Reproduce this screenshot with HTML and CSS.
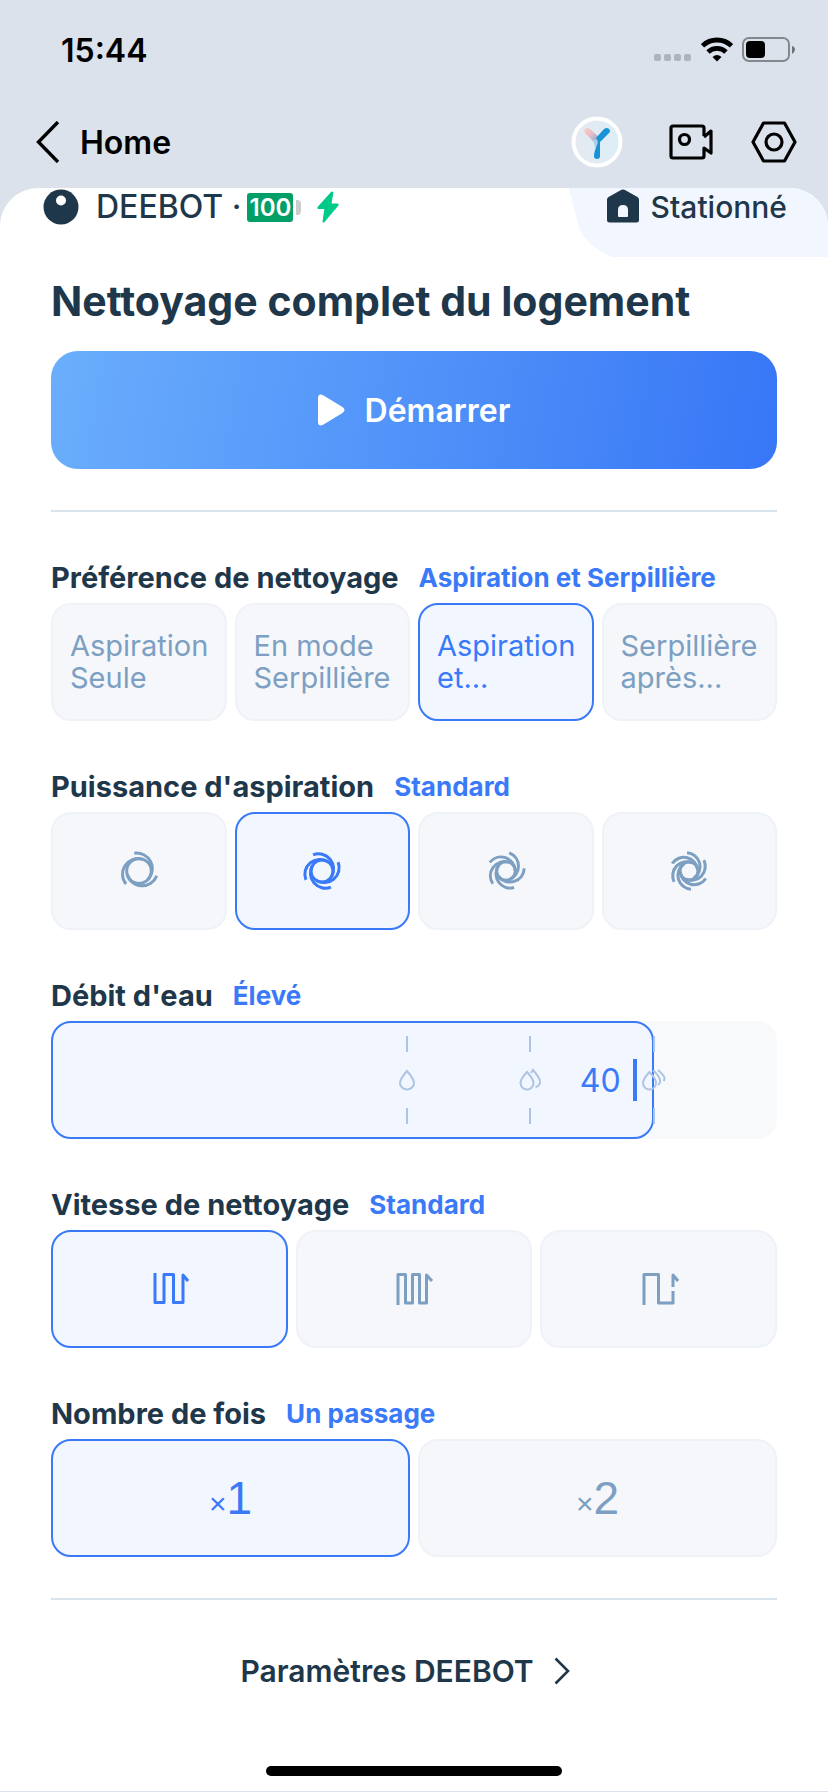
FILE: index.html
```
<!DOCTYPE html>
<html lang="fr">
<head>
    <meta charset="UTF-8">
    <meta name="viewport" content="width=device-width, initial-scale=1.0">
    <title>DEEBOT</title>
    <link rel="stylesheet" href="styles.css">
</head>
<body>

<!-- status bar -->
<div class="status">
    <span class="time">15:44</span>
    <div class="status-icons">
        <svg width="38" height="26" viewBox="0 0 38 26" fill="#adb4be">
            <rect x="0" y="17" width="7" height="7" rx="2"/>
            <rect x="10" y="17" width="7" height="7" rx="2"/>
            <rect x="20" y="17" width="7" height="7" rx="2"/>
            <rect x="30" y="17" width="7" height="7" rx="2"/>
        </svg>
        <svg width="32" height="26" viewBox="0 0 32 26" fill="none" stroke="#000" stroke-width="4.8">
            <path d="M1.500 8.800A21 21 0 0 1 30.500 8.800"/>
            <path d="M7 15A13 13 0 0 1 25 15"/>
            <path d="M16 24.500L11.500 20Q16 16 20.500 20Z" fill="#000" stroke="none"/>
        </svg>
        <svg width="54" height="26" viewBox="0 0 54 26">
            <rect x="1" y="1" width="46" height="23" rx="6" fill="none" stroke="#85898f" stroke-width="2"/>
            <rect x="4" y="4" width="19" height="17" rx="4" fill="#000"/>
            <path d="M50 9Q53 10 53 12.500T50 17Z" fill="#6f7276"/>
        </svg>
    </div>
</div>

<!-- navigation -->
<div class="nav">
    <a class="back" href="#">
        <svg width="24" height="42" viewBox="0 0 24 42" fill="none" stroke="#000" stroke-width="3.400">
            <path d="M22 1L2.500 21L22 41"/>
        </svg>
        Home
    </a>
    <div class="nav-buttons">
        <button class="avatar" aria-label="Yiko">
            <svg width="52" height="52" viewBox="0 0 52 52">
                <defs>
                    <linearGradient id="pink" x1="0" y1="0" x2="1" y2="1">
                        <stop offset="0" stop-color="#ffc9c4"/>
                        <stop offset=".4" stop-color="#e9bdc4"/>
                        <stop offset="1" stop-color="#62a8dc"/>
                    </linearGradient>
                    <linearGradient id="face" x1="0" y1="0" x2="1" y2="0">
                        <stop offset="0" stop-color="#e5e9ef"/>
                        <stop offset="1" stop-color="#dceef8"/>
                    </linearGradient>
                </defs>
                <circle cx="26" cy="26" r="23.500" fill="url(#face)" stroke="#fff" stroke-width="4"/>
                <path d="M14 17Q12 13 16 12Q18 12 20 14L29 22L27 28Q24 27 22 25Z" fill="url(#pink)"/>
                <path d="M22 24Q24 31 25 33L29 23Z" fill="#a9cfec"/>
                <path d="M33 13Q36 11 38 13T38 17L29 26Q29 33 29 40Q29 43 26 43T23 40Q23 36 26 29Q28 26 25 22Z" fill="#1793d6"/>
            </svg>
        </button>
        <button aria-label="Caméra">
            <svg width="44" height="36" viewBox="0 0 44 36" fill="none" stroke="#000" stroke-width="3.200" stroke-linejoin="round">
                <path d="M35 12V4Q35 2 33 2H4Q2 2 2 4V32Q2 34 4 34H33Q35 34 35 32V24L42 29V7L35 13"/>
                <circle cx="15.500" cy="15.500" r="5"/>
            </svg>
        </button>
        <button aria-label="Réglages">
            <svg width="46" height="42" viewBox="0 0 46 42" fill="none" stroke="#000" stroke-width="3.200" stroke-linejoin="round">
                <path d="M12.500 2H33.500L44 21L33.500 40H12.500L2 21Z"/>
                <circle cx="23" cy="21" r="8"/>
            </svg>
        </button>
    </div>
</div>

<div class="sheet">
    <div class="device">
        <div class="robot">
            <svg width="36" height="36" viewBox="0 0 36 36">
                <circle cx="18" cy="18" r="17.500" fill="#1f374a"/>
                <circle cx="18" cy="11.500" r="5" fill="#fff"/>
            </svg>
            <span class="name">DEEBOT ·</span>
            <span class="battery">100</span>
            <svg class="bolt" width="22" height="32" viewBox="0 0 22 32" fill="#00c98a">
                <path d="M14 1Q16.500 -.5 16.300 2L14.500 12.500H20.500Q22.500 13 21 15L7.500 31Q5.500 32.500 5.600 30L7.300 18H1.500Q-.5 17.500 1 15.500Z"/>
            </svg>
        </div>
        <div class="station">
            <svg width="32" height="34" viewBox="0 0 32 34">
                <path d="M14.500 .8Q16 0 17.500 .8L30.500 8Q32 9 32 10.500V31Q32 33.500 29.500 33.500H2.500Q0 33.500 0 31V10.500Q0 9 1.500 8Z" fill="#1f374a"/>
                <path d="M11 27V21Q11 16 16 16T21 21V27Q21 28 20 28H12Q11 28 11 27Z" fill="#f2f7ff"/>
            </svg>
            Stationné
        </div>
    </div>

    <div class="content">
        <h1>Nettoyage complet du logement</h1>
        <button class="start">
            <svg width="27" height="32" viewBox="0 0 27 32" fill="#fff">
                <path d="M0 4.500Q0 -1.500 5.500 1.500L24.500 13Q28.500 16 24.500 19L5.500 30.500Q0 33.500 0 27.500Z"/>
            </svg>
            Démarrer
        </button>

        <hr>

        <fieldset>
            <legend>Préférence de nettoyage <span>Aspiration et Serpillière</span></legend>
            <div class="options">
                <label class="option text"><input type="radio" name="mode">Aspiration<br>Seule</label>
                <label class="option text"><input type="radio" name="mode">En mode<br>Serpillière</label>
                <label class="option text"><input type="radio" name="mode" checked>Aspiration<br>et...</label>
                <label class="option text"><input type="radio" name="mode">Serpillière<br>après...</label>
            </div>
        </fieldset>

        <fieldset>
            <legend>Puissance d'aspiration <span>Standard</span></legend>
            <div class="options">
                <label class="option"><input type="radio" name="power" aria-label="Silencieux">
                    <svg class="fan" viewBox="-20 -20 40 40">
                        <circle r="12.300"/>
                        <path id="b1" d="M0 -18.400A15.600 15.600 0 0 1 6.200 10.600" transform="rotate(-15)"/>
                        <use href="#b1" transform="rotate(120)"/>
                        <use href="#b1" transform="rotate(240)"/>
                    </svg>
                </label>
                <label class="option"><input type="radio" name="power" aria-label="Standard" checked>
                    <svg class="fan" viewBox="-20 -20 40 40">
                        <circle r="11"/>
                        <path id="b2" d="M0 -18.400A15 15 0 0 1 5.500 9.500" transform="rotate(-29)"/>
                        <use href="#b2" transform="rotate(90)"/>
                        <use href="#b2" transform="rotate(180)"/>
                        <use href="#b2" transform="rotate(270)"/>
                    </svg>
                </label>
                <label class="option"><input type="radio" name="power" aria-label="Fort">
                    <svg class="fan" viewBox="-20 -20 40 40">
                        <circle r="9.300"/>
                        <path id="b3" d="M0 -18.400A14.300 14.300 0 0 1 4.600 8" transform="rotate(10)"/>
                        <use href="#b3" transform="rotate(72)"/>
                        <use href="#b3" transform="rotate(144)"/>
                        <use href="#b3" transform="rotate(216)"/>
                        <use href="#b3" transform="rotate(288)"/>
                    </svg>
                </label>
                <label class="option"><input type="radio" name="power" aria-label="Max">
                    <svg class="fan" viewBox="-20 -20 40 40">
                        <circle r="9"/>
                        <path id="b4" d="M0 -18.400A14 14 0 0 1 4.400 7.600" transform="rotate(-6)"/>
                        <use href="#b4" transform="rotate(60)"/>
                        <use href="#b4" transform="rotate(120)"/>
                        <use href="#b4" transform="rotate(180)"/>
                        <use href="#b4" transform="rotate(240)"/>
                        <use href="#b4" transform="rotate(300)"/>
                    </svg>
                </label>
            </div>
        </fieldset>

        <fieldset>
            <legend>Débit d'eau <span>Élevé</span></legend>
            <div class="slider">
                <div class="fill" style="width: 83%">40</div>
                <div class="mark" style="left: 49%">
                    <svg width="24" height="24" viewBox="-12 -12 24 24">
                        <path d="M0 -9Q-7 -1 -7 3A7 6.500 0 0 0 7 3Q7 -1 0 -9Z"/>
                    </svg>
                </div>
                <div class="mark" style="left: 66%">
                    <svg width="24" height="24" viewBox="-12 -12 24 24">
                        <path d="M-3 -8Q-9.500 -1 -9.500 3A6.500 6.500 0 0 0 3.500 3Q3.500 -1 -3 -8Z"/>
                        <path d="M1 -7L3 -10Q10 -2 10 1.500Q10 6 5.500 7"/>
                    </svg>
                </div>
                <div class="mark" style="left: 83%">
                    <svg width="24" height="24" viewBox="-12 -12 24 24">
                        <path d="M-4.500 -8Q-11 -1 -11 3A6.500 6.500 0 0 0 2 3Q2 -1 -4.500 -8Z"/>
                        <path d="M-1 -8L0 -9Q7 -2 6 2Q5.500 4 4 5M4 -10Q11 -4 10.500 -1Q10.500 0 9.500 1"/>
                    </svg>
                </div>
                <input type="range" min="0" max="48" value="40" aria-label="Débit d'eau">
            </div>
        </fieldset>

        <fieldset>
            <legend>Vitesse de nettoyage <span>Standard</span></legend>
            <div class="options">
                <label class="option"><input type="radio" name="speed" aria-label="Standard" checked>
                    <svg class="route" viewBox="-4 0 40 32"><path d="M2 0V29.500H11V1.500H20.500V29.500H30V2L35 8"/></svg>
                </label>
                <label class="option"><input type="radio" name="speed" aria-label="Lent">
                    <svg class="route" viewBox="-4 0 40 32"><path d="M0 32V1.500H7.500V30H14.500V1.500H21.500V30H28.500V2L34 8"/></svg>
                </label>
                <label class="option"><input type="radio" name="speed" aria-label="Rapide">
                    <svg class="route" viewBox="-4 0 40 32"><path d="M1 32V1.500H15.500V30H30V18M30 14V2L35 8"/></svg>
                </label>
            </div>
        </fieldset>

        <fieldset>
            <legend>Nombre de fois <span>Un passage</span></legend>
            <div class="options">
                <label class="option count"><input type="radio" name="count" checked><small>×</small>1</label>
                <label class="option count"><input type="radio" name="count"><small>×</small>2</label>
            </div>
        </fieldset>

        <hr>

        <a class="params" href="#">
            Paramètres DEEBOT
            <svg width="16" height="28" viewBox="0 0 16 28" fill="none" stroke="#1f374a" stroke-width="2.600">
                <path d="M1.500 1.500L14 14L1.500 26.500"/>
            </svg>
        </a>
    </div>

    <div class="home-bar"></div>
</div>

</body>
</html>
```
FILE: styles.css
```
* {
    box-sizing: border-box;
}

body {
    margin: 0;
    min-height: 100vh;
    padding-bottom: 1px;
    display: flex;
    flex-direction: column;
    background: #dbe2ec;
    color: #1f374a;
    font-family: Inter, "Liberation Sans", sans-serif;
}

svg {
    display: block;
    flex: none;
}

button {
    border: 0;
    padding: 0;
    background: none;
    font-family: inherit;
    cursor: pointer;
}

a {
    color: inherit;
    text-decoration: none;
}

/* top bars */
.status {
    height: 100px;
    padding: 0 32px 0 61px;
    display: flex;
    align-items: center;
    justify-content: space-between;
    color: #000;
}

.time {
    font-size: 32px;
    font-weight: 600;
}

.status-icons {
    display: flex;
    gap: 9px;
}

.nav {
    height: 88px;
    padding: 0 31px 4px 36px;
    display: flex;
    align-items: center;
    justify-content: space-between;
    color: #000;
}

.back {
    display: flex;
    align-items: center;
    gap: 20px;
    font-size: 32px;
    font-weight: 600;
}

.nav-buttons {
    display: flex;
    align-items: center;
    gap: 38px;
}

.avatar {
    margin-right: 8px;
}

/* white sheet */
.sheet {
    flex: 1;
    display: flex;
    flex-direction: column;
    background: #fff;
    border-radius: 38px 38px 0 0;
    overflow: hidden;
}

.device {
    display: flex;
    justify-content: space-between;
    height: 69px;
    font-size: 30px;
    font-weight: 500;
    line-height: 36px;
}

.robot {
    display: flex;
    align-items: center;
    height: 38px;
    padding-left: 43px;
}

.name {
    margin: 0 6px 0 17px;
    font-size: 32px;
}

.battery {
    position: relative;
    width: 46px;
    height: 29px;
    border-radius: 3px;
    background: #049f66;
    color: #fff;
    font-size: 24px;
    font-weight: 600;
    line-height: 30px;
    text-align: center;
}

.battery::after {
    content: "";
    position: absolute;
    left: 49px;
    top: 7px;
    width: 5px;
    height: 15px;
    border-radius: 0 4px 4px 0;
    background: #ccc;
}

.bolt {
    margin-left: 24px;
}

.station {
    display: flex;
    gap: 12px;
    padding: 1px 41px 0 38px;
    background: #f2f7ff;
    clip-path: path("M0 0H2000V69H43Q22 61 11 42Z");
}

.content {
    padding: 0 51px;
}

h1 {
    margin: 20px 0 26px;
    font-size: 41px;
    font-weight: 700;
    line-height: 48px;
}

.start {
    width: 100%;
    height: 118px;
    display: flex;
    align-items: center;
    justify-content: center;
    gap: 20px;
    border-radius: 27px;
    background: linear-gradient(100deg, #6aaefc, #3776f6);
    color: #fff;
    font-size: 32px;
    font-weight: 600;
}

hr {
    height: 2px;
    margin: 41px 0;
    border: 0;
    background: #dae4ec;
}

fieldset {
    min-width: 0;
    margin: 0 0 41px;
    padding: 0;
    border: 0;
}

legend {
    display: flex;
    align-items: center;
    gap: 20px;
    padding: 7px 0;
    font-size: 29px;
    font-weight: 700;
    line-height: 36px;
}

legend span {
    color: #3a7af8;
    font-size: 26px;
}

.options {
    display: flex;
    gap: 8px;
}

.option {
    flex: 1;
    height: 118px;
    display: flex;
    align-items: center;
    justify-content: center;
    border: 2px solid #eff2f7;
    border-radius: 20px;
    background: #f5f7fb;
    color: #7c9fc2;
    cursor: pointer;
}

.option input {
    position: absolute;
    opacity: 0;
}

.option:has(input:checked) {
    border-color: #3a7af8;
    background: #f2f7ff;
    color: #3a7af8;
}

.text {
    display: block;
    padding: 25px 0 0 17px;
    font-size: 29px;
    line-height: 32px;
}

.fan {
    width: 40px;
    height: 40px;
    fill: none;
    stroke: currentColor;
    stroke-width: 3px;
}

.route {
    width: 40px;
    height: 32px;
    fill: none;
    stroke: currentColor;
    stroke-width: 3px;
    stroke-linejoin: round;
}

.count {
    align-items: baseline;
    font-family: "Liberation Sans", Arial, sans-serif;
    font-size: 46px;
    line-height: 114px;
}

.count small {
    font-size: 30px;
}

/* water flow */
.slider {
    position: relative;
    height: 118px;
    border-radius: 20px;
    background: #f7f9fb;
}

.fill {
    height: 118px;
    padding-right: 15px;
    display: flex;
    align-items: center;
    justify-content: flex-end;
    gap: 12px;
    border: 2px solid #3a7af8;
    border-radius: 20px;
    background: #f2f7ff;
    color: #3a7af8;
    font-size: 32px;
}

.fill::after {
    content: "";
    width: 4px;
    height: 42px;
    background: #3a7af8;
}

.mark {
    position: absolute;
    top: 15px;
    bottom: 15px;
    display: flex;
    flex-direction: column;
    align-items: center;
    justify-content: space-between;
    transform: translateX(-50%);
}

.mark::before,
.mark::after {
    content: "";
    width: 2px;
    height: 16px;
    background: #adc4e2;
}

.mark svg {
    fill: none;
    stroke: #adc4e2;
    stroke-width: 2px;
}

.slider input {
    position: absolute;
    inset: 0;
    width: 100%;
    height: 100%;
    margin: 0;
    opacity: 0;
}

/* bottom */
.params {
    display: flex;
    align-items: center;
    justify-content: center;
    gap: 20px;
    padding-right: 18px;
    font-size: 30px;
    font-weight: 600;
    line-height: 60px;
}

.home-bar {
    width: 296px;
    height: 10px;
    margin: auto auto 15px;
    border-radius: 5px;
    background: #000;
}
```
